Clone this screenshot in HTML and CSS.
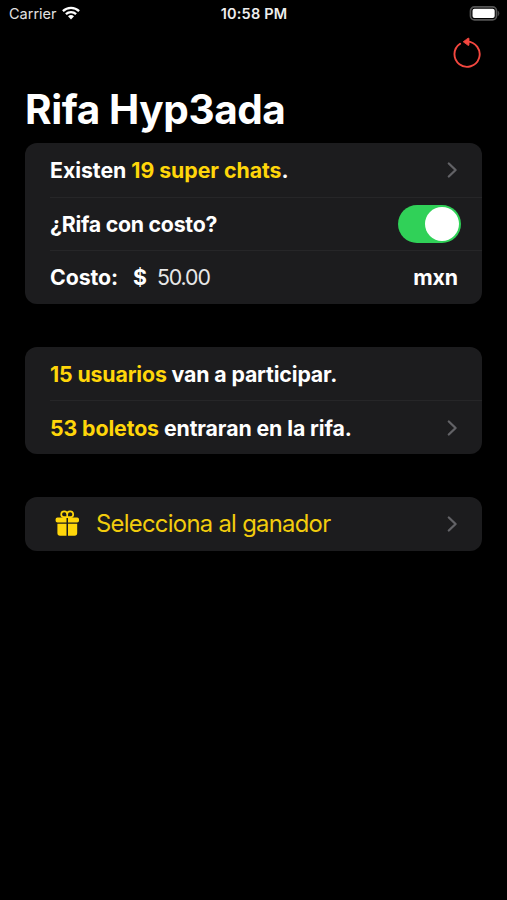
FILE: index.html
```
<!DOCTYPE html>
<html lang="es">
<head>
<meta charset="utf-8">
<title>Rifa Hyp3ada</title>
<link rel="stylesheet" href="styles.css">
</head>
<body>
<header class="status">
  <div class="carrier"><span class="carrier-name">Carrier</span>
    <svg class="wifi" width="18" height="14" viewBox="0 0 18 14"><g fill="none" stroke="#fff" stroke-width="2.3"><path d="M.9 5.1C5.4.8 12.6.8 17.1 5.1"/><path d="M3.9 8.2C6.8 5.4 11.2 5.4 14.1 8.2"/></g><path fill="#fff" d="M6 10.3Q9 7.8 12 10.3L9 13.5Z"/></svg>
  </div>
  <span class="clock">10:58 PM</span>
  <svg class="battery" width="31" height="15" viewBox="0 0 31 15"><rect x="1.5" y=".9" width="26" height="13" rx="4" fill="none" stroke="#555" stroke-width="1.7"/><rect x="3.5" y="2.8" width="22.2" height="9.2" rx="2" fill="#fff"/><path d="M29.2 5.3q1.7 2.1 0 4.3z" fill="#555" stroke="#555" stroke-width=".6"/></svg>
</header>
<nav class="toolbar">
  <svg width="30" height="32" viewBox="0 0 30 32"><path d="M8.1 6.7A12.6 12.6 0 1 0 15 4.6" fill="none" stroke="#f4473f" stroke-width="1.9" stroke-linecap="round"/><path d="M11.2 4.8L16 1.2Q17 .7 17 1.7V7.8Q17 8.8 16 8.3Z" fill="#f4473f" stroke="#f4473f" stroke-width=".8" stroke-linejoin="round"/></svg>
</nav>
<main>
  <h1>Rifa Hyp3ada</h1>
  <section class="card">
    <div class="row"><span class="chats">Existen <em>19 super chats</em>.</span><svg class="chevron" width="12" height="18" viewBox="0 0 12 18"><path d="M2.8 2.5L9.6 9L2.8 15.5"/></svg></div>
    <div class="row"><span class="question">¿Rifa con costo?</span><span class="switch"><span class="knob"></span></span></div>
    <div class="row"><span>Costo:</span><span class="dollar">$</span><span class="amount">50.00</span><span class="unit">mxn</span></div>
  </section>
  <section class="card">
    <div class="row"><span class="users"><em>15 usuarios</em> van a participar.</span></div>
    <div class="row"><span class="tickets"><em>53 boletos</em> entraran en la rifa.</span><svg class="chevron" width="12" height="18" viewBox="0 0 12 18"><path d="M2.8 2.5L9.6 9L2.8 15.5"/></svg></div>
  </section>
  <section class="card">
    <div class="row">
      <svg class="gift" width="25" height="26" viewBox="0 0 25 26"><g fill="none" stroke="#ffd60a" stroke-width="1.7"><path d="M12.2 7.2H8.5A3 3 0 1 1 12.2 4.2ZM12.2 7.2H16A3 3 0 1 0 12.2 4.2Z"/></g><g fill="#ffd60a"><path d="M2.4 7.4H11.5V12.5H2.4Q.6 12.5.6 10.7V9.2Q.6 7.4 2.4 7.4ZM13 7.4H22.2Q24 7.4 24 9.2V10.7Q24 12.5 22.2 12.5H13Z"/><path d="M2.4 13.8H11.5V25.7H5Q2.4 25.7 2.4 23.1ZM13 13.8H22.2V23.1Q22.2 25.7 19.6 25.7H13Z"/></g></svg>
      <span class="action">Selecciona al ganador</span><svg class="chevron" width="12" height="18" viewBox="0 0 12 18"><path d="M2.8 2.5L9.6 9L2.8 15.5"/></svg></div>
  </section>
</main>
</body>
</html>
```
FILE: styles.css
```
* { box-sizing: border-box; }
body { margin: 0; min-height: 900px; background: #000; color: #fff; font-family: Inter, "Liberation Sans", sans-serif; }
svg { display: block; flex: none; }
.status { display: grid; grid-template-columns: 1fr auto 1fr; align-items: center; height: 27px; padding: 0 7px 0 9px; font-size: 14.5px; line-height: 27px; }
.carrier { display: flex; align-items: center; gap: 5px; color: #e2e2e2; }
.wifi { margin-top: -2px; }
.clock { margin-right: 1px; font-size: 14.5px; font-weight: 600; letter-spacing: .2px; color: #eee; }
.battery { justify-self: end; }
.toolbar { display: flex; justify-content: flex-end; height: 56px; padding: 10px 25px 0 0; }
main { padding: 0 25px; }
h1 { margin: 0; height: 60px; font-size: 40.5px; line-height: 53px; font-weight: 700; letter-spacing: -.4px; white-space: nowrap; }
.card { margin-bottom: 43px; border-radius: 12px; background: #1c1c1e; overflow: hidden; }
.row { display: flex; align-items: center; height: 53.6px; margin-left: 25px; padding-right: 24px; font-size: 21.3px; font-weight: 700; letter-spacing: -.08px; white-space: nowrap; }
.row + .row { border-top: 1px solid #262628; }
em { font-style: normal; color: #ffd60a; }
.chats { letter-spacing: -.04px; }
.question { letter-spacing: -.25px; }
.users { letter-spacing: -.14px; }
.tickets { letter-spacing: -.1px; }
.chevron { margin-left: auto; }
.chevron path { fill: none; stroke: #626266; stroke-width: 2.3; stroke-linecap: round; stroke-linejoin: round; }
.switch { display: flex; justify-content: flex-end; width: 63px; height: 38px; margin: 0 -3px 0 auto; padding: 2px; border-radius: 19px; background: #30d158; }
.knob { width: 34px; height: 34px; border-radius: 50%; background: #fff; }
.dollar { margin-left: 15px; }
.amount { margin-left: 10px; font-weight: 400; letter-spacing: -1.1px; color: #e8e8e8; }
.unit { margin-left: auto; }
.gift { margin: -2px 16px 0 5px; }
.action { font-size: 23.8px; font-weight: 400; letter-spacing: -.7px; color: #f2cc0d; }
```
